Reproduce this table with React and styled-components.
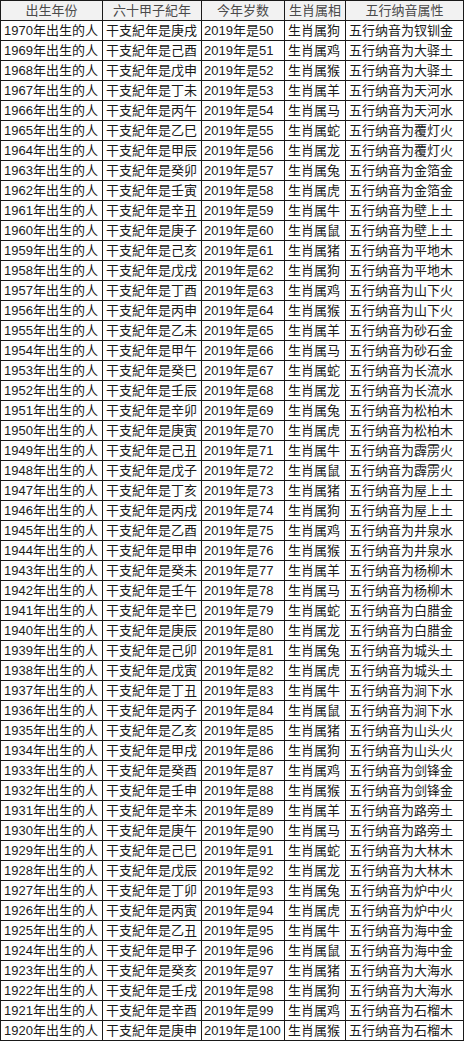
import React from "react";
import styled, { createGlobalStyle } from "styled-components";

const GlobalStyle = createGlobalStyle`
  html, body {
    margin: 0;
    padding: 0;
    background: #fff;
  }
`;

const stems = "甲乙丙丁戊己庚辛壬癸";
const branches = "子丑寅卯辰巳午未申酉戌亥";
const animals = "鼠牛虎兔龙蛇马羊猴鸡狗猪";

// 纳音 按双年分组 (偶数年为键)
const nayinMap = {
  1970: "钗钏金", 1968: "大驿土", 1966: "天河水", 1964: "覆灯火", 1962: "金箔金",
  1960: "壁上土", 1958: "平地木", 1956: "山下火", 1954: "砂石金", 1952: "长流水",
  1950: "松柏木", 1948: "霹雳火", 1946: "屋上土", 1944: "井泉水", 1942: "杨柳木",
  1940: "白腊金", 1938: "城头土", 1936: "涧下水", 1934: "山头火", 1932: "剑锋金",
  1930: "路旁土", 1928: "大林木", 1926: "炉中火", 1924: "海中金", 1922: "大海水",
  1920: "石榴木",
};

const rows = [];
for (let y = 1970; y >= 1920; y--) {
  rows.push({
    year: y,
    ganzhi: stems[(y - 4) % 10] + branches[(y - 4) % 12],
    age: 2020 - y,
    animal: animals[(y - 4) % 12],
    nayin: nayinMap[y - (y % 2)],
  });
}

const Table = styled.table`
  border-collapse: collapse;
  table-layout: fixed;
  width: 463px;
  font-family: "Liberation Sans", "Noto Sans CJK SC", sans-serif;
  font-size: 13px;
  color: #1a1a1a;
`;

const HeadCell = styled.th`
  height: 19px;
  padding: 0;
  border: 1px solid #1a1a1a;
  background: #f2f2f2;
  color: #4a4a4a;
  font-weight: normal;
  text-align: center;
  line-height: 19px;
  white-space: nowrap;
`;

const Cell = styled.td`
  height: 19px;
  padding: 0 0 0 ${(p) => p.$pad || 3}px;
  border: 1px solid #1a1a1a;
  line-height: 19px;
  white-space: nowrap;
  overflow: hidden;
`;

export default function App() {
  return (
    <>
      <GlobalStyle />
      <Table>
        <colgroup>
          <col style={{ width: 102 }} />
          <col style={{ width: 99 }} />
          <col style={{ width: 83 }} />
          <col style={{ width: 61 }} />
          <col style={{ width: 118 }} />
        </colgroup>
        <thead>
          <tr>
            <HeadCell>出生年份</HeadCell>
            <HeadCell>六十甲子紀年</HeadCell>
            <HeadCell>今年岁数</HeadCell>
            <HeadCell>生肖属相</HeadCell>
            <HeadCell>五行纳音属性</HeadCell>
          </tr>
        </thead>
        <tbody>
          {rows.map((r) => (
            <tr key={r.year}>
              <Cell>{r.year}年出生的人</Cell>
              <Cell>干支紀年是{r.ganzhi}</Cell>
              <Cell $pad={2}>2019年是{r.age}</Cell>
              <Cell>生肖属{r.animal}</Cell>
              <Cell>五行纳音为{r.nayin}</Cell>
            </tr>
          ))}
        </tbody>
      </Table>
    </>
  );
}
